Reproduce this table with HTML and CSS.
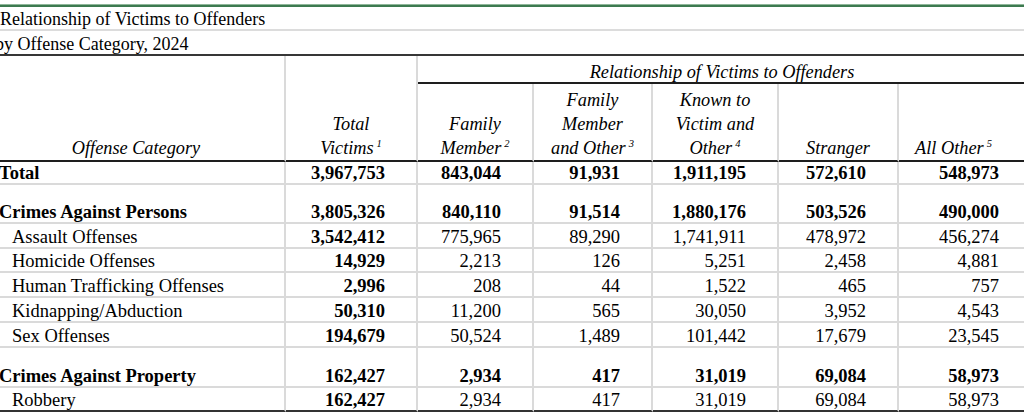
FILE: index.html
```html
<!DOCTYPE html>
<html lang="en">
<head>
<meta charset="utf-8">
<title>Relationship of Victims to Offenders by Offense Category, 2024</title>
<link rel="stylesheet" href="styles.css">
</head>
<body>
<div class="sheet">
  <div class="rule-green"></div>
  <div class="title title-1"><span class="title-text">Relationship of Victims to Offenders</span></div>
  <div class="title title-2"><span class="title-text shift">by Offense Category, 2024</span></div>
  <div class="grid">
    <div class="cell hd hd-span"><div class="hd-text">Offense Category</div></div>
    <div class="cell hd hd-span"><div class="hd-text">Total<br>Victims<sup class="fn">1</sup></div></div>
    <div class="cell hd hd-group"><div class="hd-text">Relationship of Victims to Offenders</div></div>
    <div class="cell hd hd-sub"><div class="hd-text">Family<br>Member<sup class="fn">2</sup></div></div>
    <div class="cell hd hd-sub"><div class="hd-text">Family<br>Member<br>and Other<sup class="fn">3</sup></div></div>
    <div class="cell hd hd-sub"><div class="hd-text">Known to<br>Victim and<br>Other<sup class="fn">4</sup></div></div>
    <div class="cell hd hd-sub"><div class="hd-text">Stranger</div></div>
    <div class="cell hd hd-sub hd-last"><div class="hd-text">All Other<sup class="fn">5</sup></div></div>

    <div class="cell cat b">Total</div>
    <div class="cell num b">3,967,753</div>
    <div class="cell num b">843,044</div>
    <div class="cell num b">91,931</div>
    <div class="cell num b">1,911,195</div>
    <div class="cell num b">572,610</div>
    <div class="cell num b">548,973</div>

    <div class="cell cat b">Crimes Against Persons</div>
    <div class="cell num b">3,805,326</div>
    <div class="cell num b">840,110</div>
    <div class="cell num b">91,514</div>
    <div class="cell num b">1,880,176</div>
    <div class="cell num b">503,526</div>
    <div class="cell num b">490,000</div>

    <div class="cell cat sub">Assault Offenses</div>
    <div class="cell num b">3,542,412</div>
    <div class="cell num">775,965</div>
    <div class="cell num">89,290</div>
    <div class="cell num">1,741,911</div>
    <div class="cell num">478,972</div>
    <div class="cell num">456,274</div>

    <div class="cell cat sub">Homicide Offenses</div>
    <div class="cell num b">14,929</div>
    <div class="cell num">2,213</div>
    <div class="cell num">126</div>
    <div class="cell num">5,251</div>
    <div class="cell num">2,458</div>
    <div class="cell num">4,881</div>

    <div class="cell cat sub">Human Trafficking Offenses</div>
    <div class="cell num b">2,996</div>
    <div class="cell num">208</div>
    <div class="cell num">44</div>
    <div class="cell num">1,522</div>
    <div class="cell num">465</div>
    <div class="cell num">757</div>

    <div class="cell cat sub">Kidnapping/Abduction</div>
    <div class="cell num b">50,310</div>
    <div class="cell num">11,200</div>
    <div class="cell num">565</div>
    <div class="cell num">30,050</div>
    <div class="cell num">3,952</div>
    <div class="cell num">4,543</div>

    <div class="cell cat sub">Sex Offenses</div>
    <div class="cell num b">194,679</div>
    <div class="cell num">50,524</div>
    <div class="cell num">1,489</div>
    <div class="cell num">101,442</div>
    <div class="cell num">17,679</div>
    <div class="cell num">23,545</div>

    <div class="cell cat b">Crimes Against Property</div>
    <div class="cell num b">162,427</div>
    <div class="cell num b">2,934</div>
    <div class="cell num b">417</div>
    <div class="cell num b">31,019</div>
    <div class="cell num b">69,084</div>
    <div class="cell num b">58,973</div>

    <div class="cell cat sub end">Robbery</div>
    <div class="cell num b end">162,427</div>
    <div class="cell num end">2,934</div>
    <div class="cell num end">417</div>
    <div class="cell num end">31,019</div>
    <div class="cell num end">69,084</div>
    <div class="cell num end">58,973</div>
  </div>
</div>
</body>
</html>
```

FILE: styles.css
```css
html, body {
  margin: 0;
  padding: 0;
  overflow: hidden;
  background: #ffffff;
}

body {
  font-family: "Liberation Serif", "Times New Roman", serif;
  font-size: 18px;
  color: #000000;
  width: 1024px;
  height: 415px;
}

.sheet {
  padding-top: 4px;
}

.rule-green {
  height: 3px;
  box-sizing: border-box;
  border-top: 1px solid #8fb79a;
  background: #3d7a50;
}

.title {
  box-sizing: border-box;
  display: flex;
  align-items: flex-end;
  line-height: 20px;
  white-space: nowrap;
}

.title-1 {
  height: 24px;
  border-bottom: 2px solid #dcdcdc;
}

.title-2 {
  height: 25px;
  border-bottom: 2px solid #363636;
}

.title-text.shift {
  margin-left: -5px;
}

.grid {
  display: grid;
  grid-template-columns: 298px 132px 116px 119px 126px 120px 133px;
  grid-template-rows: 28px 78px 23px 39px 25px 24px 25px 25px 25px 40px 24px;
  margin-left: -12px;
  width: 1044px;
  font-size: 18.5px;
}

.cell {
  box-sizing: border-box;
  border-right: 2px solid #dadada;
  border-bottom: 2px solid #dadada;
  display: flex;
  align-items: flex-end;
  line-height: 20px;
  white-space: nowrap;
}

.hd {
  font-style: italic;
  justify-content: center;
  font-size: 18.3px;
}

.hd-text {
  text-align: center;
  line-height: 24px;
}

.hd-span {
  grid-row: span 2;
  border-bottom-color: #1e1e1e;
}

.hd-group {
  grid-column: 3 / span 5;
  border-bottom-color: #1e1e1e;
  border-right: none;
  padding-right: 6px;
}

.hd-group .hd-text {
  line-height: 20px;
}

.hd-sub {
  border-bottom-color: #1e1e1e;
}

.hd-last {
  padding-right: 22px;
}

.fn {
  font-size: 10.5px;
  line-height: 0;
  vertical-align: 7px;
  margin-left: 3px;
}

.cat {
  padding-left: 11px;
}

.cat.sub {
  padding-left: 24px;
}

.num {
  justify-content: flex-end;
  padding-right: 31px;
}

.b {
  font-weight: bold;
}

.end {
  border-bottom-color: #333333;
}
```
